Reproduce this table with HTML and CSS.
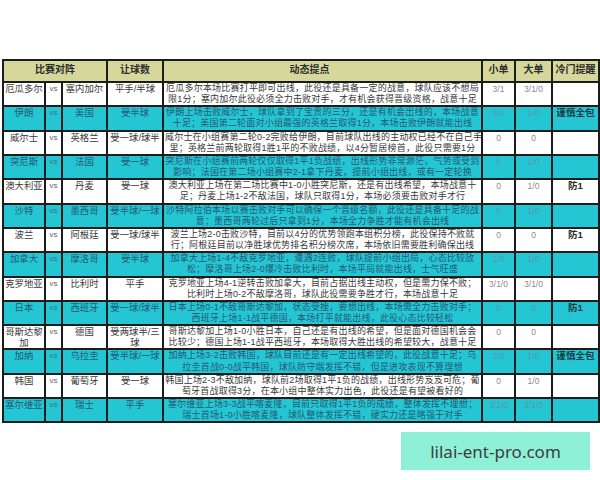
FILE: index.html
```html
<!DOCTYPE html>
<html lang="zh">
<head>
<meta charset="utf-8">
<title>比赛对阵</title>
<link rel="stylesheet" href="styles.css">
</head>
<body>
<div class="page">
<table class="odds">
<colgroup>
<col class="c-team"><col class="c-vs"><col class="c-team2"><col class="c-hcp"><col class="c-note"><col class="c-small"><col class="c-big"><col class="c-cold">
</colgroup>
<thead>
<tr><th colspan="3">比赛对阵</th><th>让球数</th><th class="h-note">动态提点</th><th>小单</th><th>大单</th><th>冷门提醒</th></tr>
</thead>
<tbody>
<tr class="w"><td>厄瓜多尔</td><td class="vs">vs</td><td>塞内加尔</td><td>平手/半球</td><td class="note">厄瓜多尔本场比赛打平即可出线，此役还是具备一定的战意，球队应该不想局<br>限1分；塞内加尔此役必须全力击败对手，才有机会获得晋级资格，战意十足</td><td class="num">3/1</td><td class="num">3/1/0</td><td class="cold"></td></tr>
<tr class="c"><td>伊朗</td><td class="vs">vs</td><td>美国</td><td>受半球</td><td class="note">伊朗上场击败威尔士，球队拿到了宝贵的三分，还是有机会出线的，本场战意<br>十足；美国第二轮面对小组最强的英格兰取得1分，本场击败伊朗就能出线</td><td class="num">1/0</td><td class="num">1/0</td><td class="cold">谨慎全包</td></tr>
<tr class="w"><td>威尔士</td><td class="vs">vs</td><td>英格兰</td><td>受一球/球半</td><td class="note">威尔士在小组赛第二轮0-2完败给伊朗，目前球队出线的主动权已经不在自己手<br>里；英格兰前两轮取得1胜1平的不败战绩，以4分暂居榜首，此役只需要1分</td><td class="num">0</td><td class="num">0</td><td class="cold"></td></tr>
<tr class="c"><td>突尼斯</td><td class="vs">vs</td><td>法国</td><td>受一球</td><td class="note">突尼斯在小组赛前两轮仅仅取得1平1负战绩，出线形势非常渺茫，气势或受到<br>影响；法国在第二场小组赛中2-1拿下丹麦，提前小组出线，或有一定轮换</td><td class="num">0</td><td class="num">1/0</td><td class="cold"></td></tr>
<tr class="w"><td>澳大利亚</td><td class="vs">vs</td><td>丹麦</td><td>受一球</td><td class="note">澳大利亚上场在第二场比赛中1-0小胜突尼斯，还是有出线希望，本场战意十<br>足；丹麦上场1-2不敌法国，球队只取得1分，本场必须要击败对手才行</td><td class="num">0</td><td class="num">1/0</td><td class="cold">防1</td></tr>
<tr class="c"><td>沙特</td><td class="vs">vs</td><td>墨西哥</td><td>受半球/一球</td><td class="note">沙特阿拉伯本场以赛击败对手可以确保一个晋级名额，此役还是具备十足的战<br>意；墨西哥两轮过后只拿到1分，本场全力争胜才能有机会出线</td><td class="num">0</td><td class="num">1/0</td><td class="cold"></td></tr>
<tr class="w"><td>波兰</td><td class="vs">vs</td><td>阿根廷</td><td>受一球/球半</td><td class="note">波兰上场2-0击败沙特，目前以4分的优势领跑本组积分榜，此役保持不败就<br>行；阿根廷目前以净胜球优势排名积分榜次席，本场依旧需要胜利确保出线</td><td class="num">0</td><td class="num">0</td><td class="cold">防1</td></tr>
<tr class="c"><td>加拿大</td><td class="vs">vs</td><td>摩洛哥</td><td>受半球</td><td class="note">加拿大上场1-4不敌克罗地亚，遭遇2连败，球队提前小组出局，心态比较放<br>松；摩洛哥上场2-0爆冷击败比利时，本场平局就能出线，士气旺盛</td><td class="num">1/0</td><td class="num">1/0</td><td class="cold"></td></tr>
<tr class="w"><td>克罗地亚</td><td class="vs">vs</td><td>比利时</td><td>平手</td><td class="note">克罗地亚上场4-1逆转击败加拿大，目前占据出线主动权，但是需力保不败；<br>比利时上场0-2不敌摩洛哥，球队此役需要争胜才行，本场战意十足</td><td class="num">3/1/0</td><td class="num">3/1/0</td><td class="cold"></td></tr>
<tr class="c"><td>日本</td><td class="vs">vs</td><td>西班牙</td><td>受一球/球半</td><td class="note">日本上场0-1不敌哥斯达黎加，状态受挫，要想出线，本场需全力击败对手；<br>西班牙上场1-1战平德国，本场打平就能出线，此役心态比较轻松</td><td class="num">0</td><td class="num">0</td><td class="cold">防1</td></tr>
<tr class="w"><td>哥斯达黎加</td><td class="vs">vs</td><td>德国</td><td>受两球半/三球</td><td class="note">哥斯达黎加上场1-0小胜日本，自己还是有出线的希望，但是面对德国机会会<br>比较少；德国上场1-1战平西班牙，本场取得大胜出线的希望较大，战意十足</td><td class="num">0</td><td class="num">0</td><td class="cold"></td></tr>
<tr class="c"><td>加纳</td><td class="vs">vs</td><td>乌拉圭</td><td>受半球/一球</td><td class="note">加纳上场3-2击败韩国，球队目前还是有一定出线希望的，此役战意十足；乌<br>拉圭首战0-0战平韩国，球队防守端发挥不错，但是进攻表现不算理想</td><td class="num">1/0</td><td class="num">1/0</td><td class="cold">谨慎全包</td></tr>
<tr class="w"><td>韩国</td><td class="vs">vs</td><td>葡萄牙</td><td>受一球</td><td class="note">韩国上场2-3不敌加纳，球队前2场取得1平1负的战绩，出线形势岌岌可危；葡<br>萄牙首战取得3分，在本小组中整体实力出色，此役还是有望被看好的</td><td class="num">0</td><td class="num">1/0</td><td class="cold"></td></tr>
<tr class="c"><td>塞尔维亚</td><td class="vs">vs</td><td>瑞士</td><td>平手</td><td class="note">塞尔维亚上场3-3战平喀麦隆，目前只取得1平1负的成绩，整体发挥不理想；<br>瑞士首场1-0小胜喀麦隆，球队整体发挥不错，硬实力还是略强于对手</td><td class="num">3/1/0</td><td class="num">3/1/0</td><td class="cold"></td></tr>
</tbody>
</table>
<div class="badge-row"><div class="badge">lilai-ent-pro.com</div></div>
</div>
</body>
</html>
```
FILE: styles.css
```css
html, body {
  margin: 0;
  background: #ffffff;
}
body {
  font-family: "Noto Sans CJK SC", "Noto Sans", sans-serif;
  color: #333333;
}
.page {
  padding: 59px 0 0 2px;
}
.odds {
  border-collapse: collapse;
  table-layout: fixed;
  width: 597px;
}
.c-team { width: 42px; }
.c-vs { width: 17px; }
.c-team2 { width: 45px; }
.c-hcp { width: 56px; }
.c-note { width: 319px; }
.c-small { width: 33px; }
.c-big { width: 37px; }
.c-cold { width: 47px; }

.odds th,
.odds td {
  border: 2px solid #1c1c1c;
  overflow: hidden;
  text-align: center;
  vertical-align: top;
}
.odds th {
  background: #d6d89b;
  font-size: 10px;
  font-weight: bold;
  line-height: 14px;
  padding: 1px 0 5px;
  color: #2e2e2e;
  white-space: nowrap;
}
.odds th.h-note {
  padding-right: 26px;
}
.odds td {
  font-family: "Liberation Sans", "Noto Sans CJK SC", sans-serif;
  font-size: 9.4px;
  line-height: 11.15px;
  padding: 0 1px;
}
.odds td.note {
  white-space: nowrap;
  font-size: 9px;
  letter-spacing: 0.2px;
  padding: 0 1px;
}
.odds td.vs {
  font-size: 8px;
  color: #666666;
}
.odds td.num {
  font-size: 8.5px;
  color: #8c8c8c;
  padding-top: 1px;
}
.odds td.cold {
  font-weight: bold;
  font-size: 9.6px;
  color: #2a2a2a;
}
tr.w td {
  background: #ffffff;
  color: #383838;
}
tr.c td {
  background: #24c6d3;
  color: #245a73;
}
tr.c td.num {
  color: #5b98a6;
}
tr.c td.vs {
  color: #3f7380;
}
tr.c td.cold {
  color: #173b44;
}
tr.w td.num {
  color: #8c8c8c;
}
.badge-row {
  display: flex;
  justify-content: flex-end;
  padding: 9px 10px 0 0;
}
.badge {
  width: 189px;
  height: 38px;
  background: #8ef0d6;
  display: flex;
  align-items: center;
  justify-content: center;
  font-family: "Noto Sans", sans-serif;
  font-size: 17px;
  color: #3d3d3d;
}
```
